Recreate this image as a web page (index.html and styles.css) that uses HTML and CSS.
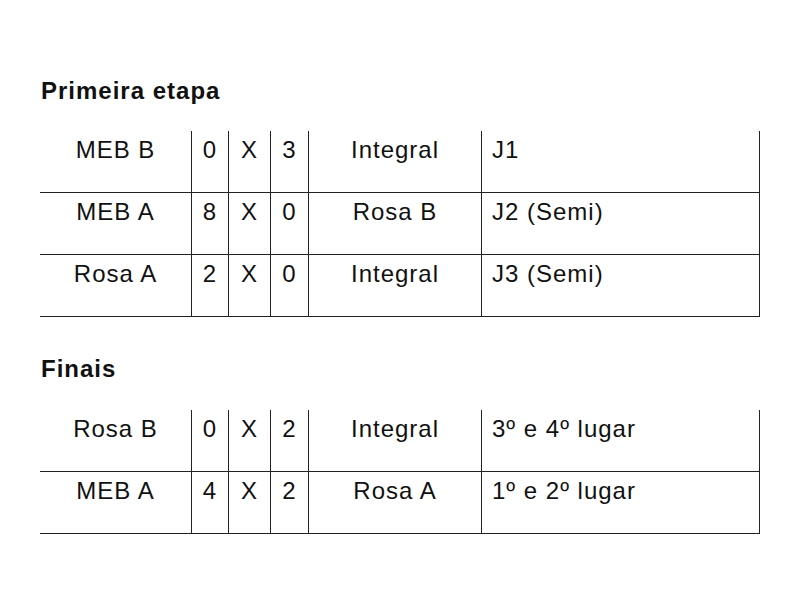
FILE: index.html
```html
<!DOCTYPE html>
<html lang="pt">
<head>
<meta charset="utf-8">
<title>Resultados</title>
<link rel="stylesheet" href="styles.css">
</head>
<body>
<main class="page">
  <h2 class="heading">Primeira etapa</h2>
  <div class="grid">
    <div class="cell">MEB B</div><div class="cell">0</div><div class="cell">X</div><div class="cell">3</div><div class="cell">Integral</div><div class="cell left">J1</div>
    <div class="cell">MEB A</div><div class="cell">8</div><div class="cell">X</div><div class="cell">0</div><div class="cell">Rosa B</div><div class="cell left">J2 (Semi)</div>
    <div class="cell">Rosa A</div><div class="cell">2</div><div class="cell">X</div><div class="cell">0</div><div class="cell">Integral</div><div class="cell left">J3 (Semi)</div>
  </div>
  <h2 class="heading second">Finais</h2>
  <div class="grid">
    <div class="cell">Rosa B</div><div class="cell">0</div><div class="cell">X</div><div class="cell">2</div><div class="cell">Integral</div><div class="cell left">3º e 4º lugar</div>
    <div class="cell">MEB A</div><div class="cell">4</div><div class="cell">X</div><div class="cell">2</div><div class="cell">Rosa A</div><div class="cell left">1º e 2º lugar</div>
  </div>
</main>
</body>
</html>
```
FILE: styles.css
```css
html, body {
  margin: 0;
  padding: 0;
  background: #ffffff;
}
.page {
  padding: 78px 0 0 40px;
  font-family: "Liberation Sans", Arial, sans-serif;
  color: #111111;
}
.heading {
  margin: 0 0 27px 0;
  padding-left: 1px;
  font-size: 24px;
  line-height: 26px;
  font-weight: bold;
  letter-spacing: 1px;
}
.heading.second {
  margin-top: 39px;
  margin-bottom: 28px;
}
.grid {
  display: grid;
  grid-template-columns: 152px 37px 42px 38px 173px 278px;
  grid-auto-rows: 62px;
  width: 720px;
}
.cell {
  box-sizing: border-box;
  border-right: 1px solid #222222;
  border-bottom: 1px solid #222222;
  padding-top: 6px;
  font-size: 24px;
  line-height: 26px;
  letter-spacing: 1px;
  text-align: center;
  white-space: nowrap;
}
.cell.left {
  text-align: left;
  padding-left: 10px;
}
```
